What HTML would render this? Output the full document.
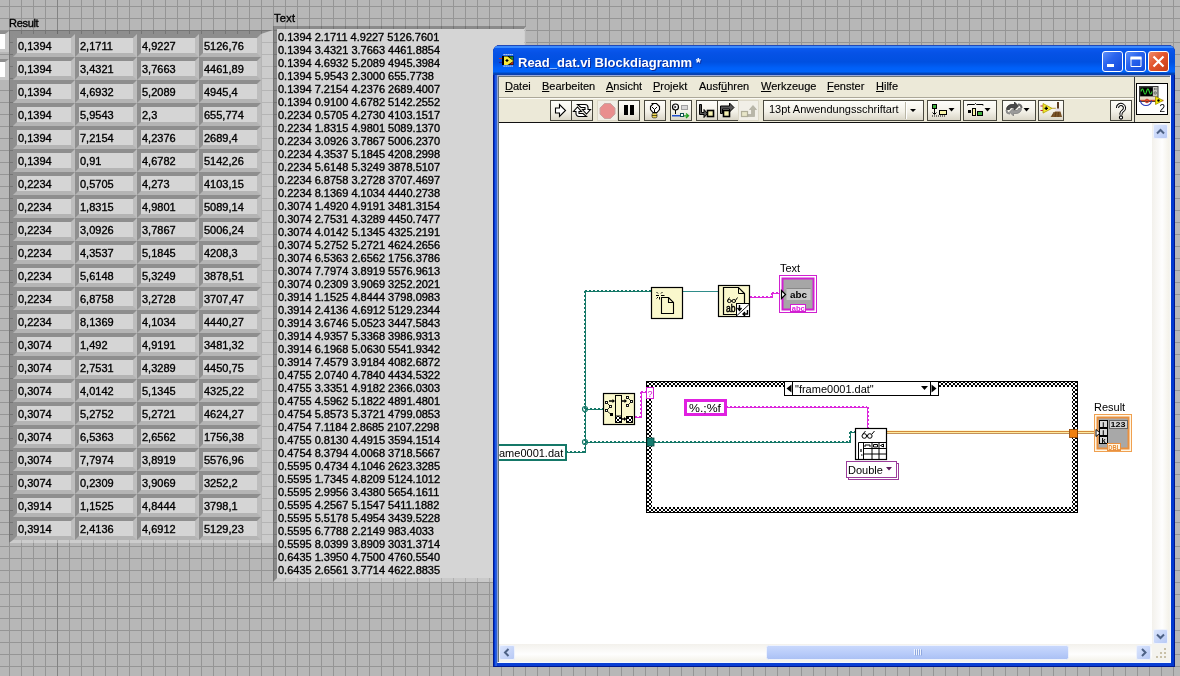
<!DOCTYPE html>
<html><head><meta charset="utf-8">
<style>
*{margin:0;padding:0;box-sizing:border-box}
html,body{width:1180px;height:676px;overflow:hidden}
body{position:relative;font-family:"Liberation Sans",sans-serif;font-size:11px;color:#000;-webkit-text-stroke:0.35px #000;
background-color:#b7b7b7;
background-image:linear-gradient(to right,#959595 1px,transparent 1px),linear-gradient(to bottom,#959595 1px,transparent 1px);
background-size:12px 12px;background-position:9px 6px}
.a{position:absolute}
.lbl{position:absolute;font-size:11px;line-height:13px;white-space:nowrap;letter-spacing:-0.3px}
/* array */
#arr{left:9px;top:30px;width:264px;height:513px;border-style:solid;border-width:4px 12px 3px 4px;border-color:rgba(40,40,40,.28) rgba(255,255,255,.3) rgba(255,255,255,.3) rgba(40,40,40,.28);background:transparent}
.cell{position:absolute;width:62px;height:23px;border:4px solid;border-color:#8e8e8e #bdbdbd #b4b4b4 #8f8f8f;background:#d5d5d5;padding-left:1px;padding-top:1px;line-height:15px;font-size:11px;white-space:nowrap}
.idx{position:absolute;left:-10px;width:19px;height:21px;border-style:solid;border-width:3px 4px 3px 0;border-color:#8e8e8e #c8c8c8 #c8c8c8 #8e8e8e;background:#fff}
/* text indicator */
#txt{left:273px;top:26px;width:253px;height:556px;border-style:solid;border-width:3px 2px 4px 4px;border-color:rgba(40,40,40,.3) rgba(255,255,255,.35) rgba(255,255,255,.25) rgba(40,40,40,.3);background:#d5d5d5;background-clip:padding-box}
#txtc{position:absolute;left:1px;top:2px;line-height:13px;font-size:11px;white-space:nowrap}
/* window */
#win{left:493px;top:45px;width:682px;height:622px;background:linear-gradient(to right,#0038d0 0px,#0038d0 2px,#2058e8 2px,#2058e8 3px,#3060d0 3px,#3060d0 4px,#0a3fd4 4px,#0a3fd4 678px,#0038d0 678px);box-shadow:inset 1px 0 0 #001890,inset -1px 0 0 #001890,inset 0 -1px 0 #001890;border-radius:7px 7px 0 0;overflow:hidden}
#title{left:0;top:0;width:682px;height:30px;background:linear-gradient(to bottom,#2048b8 0px,#2048b8 1px,#3c8cff 1px,#3a88fc 3px,#0a5af0 3px,#0652e6 8px,#0050e0 17px,#0060f8 23px,#0064fa 27px,#0048c0 28px,#0a3ca8 30px)}
#ttext{left:25px;top:10px;font-weight:bold;font-size:13px;line-height:15px;color:#fff;-webkit-text-stroke:0;text-shadow:1px 1px 0 #0a2a9a;white-space:nowrap}
.tb{position:absolute;top:6px;width:21px;height:21px;border:1px solid #fff;border-radius:3px;background:linear-gradient(135deg,#5e90f8 0%,#2a64ee 40%,#1149dc 100%)}
#menubar{left:499px;top:77px;width:671px;height:20px;background:#ece9d8}
.mi{position:absolute;top:3px;font-size:11px;line-height:13px;white-space:nowrap;-webkit-text-stroke:0.15px #000}
.mi u{text-decoration:underline;text-underline-offset:1px}
#toolbar{left:499px;top:97px;width:671px;height:26px;background:#ece9d8;border-bottom:1px solid #111}
#canvas{left:499px;top:123px;width:653px;height:521px;background:#fff;overflow:hidden}
#vsb{left:1152px;top:123px;width:17px;height:521px;background:linear-gradient(to right,#f3f1ec,#fefefe 60%,#f4f2ea)}
#hsb{left:499px;top:644px;width:653px;height:17px;background:linear-gradient(to bottom,#f3f1ec,#fefefe 60%,#f4f2ea)}
.sbb{position:absolute;width:15px;height:15px;border:1px solid #e8eefc;border-radius:2px;background:linear-gradient(135deg,#d2defc,#b9cbf6)}

</style></head><body><div id="root" style="position:absolute;left:0;top:0;width:1180px;height:676px;will-change:transform">
<div class="a" style="left:57px;top:0;width:1px;height:676px;background:#838383"></div>
<div class="lbl" style="left:9px;top:17px">Result</div>
<div class="lbl" style="left:274px;top:12px;letter-spacing:0.3px">Text</div>
<div class="a" id="arr"></div>
<div class="idx" style="top:31px"></div>
<div class="idx" style="top:59px"></div>
<div class="cell" style="left:13px;top:34px">0,1394</div>
<div class="cell" style="left:75px;top:34px">2,1711</div>
<div class="cell" style="left:137px;top:34px">4,9227</div>
<div class="cell" style="left:199px;top:34px">5126,76</div>
<div class="cell" style="left:13px;top:57px">0,1394</div>
<div class="cell" style="left:75px;top:57px">3,4321</div>
<div class="cell" style="left:137px;top:57px">3,7663</div>
<div class="cell" style="left:199px;top:57px">4461,89</div>
<div class="cell" style="left:13px;top:80px">0,1394</div>
<div class="cell" style="left:75px;top:80px">4,6932</div>
<div class="cell" style="left:137px;top:80px">5,2089</div>
<div class="cell" style="left:199px;top:80px">4945,4</div>
<div class="cell" style="left:13px;top:103px">0,1394</div>
<div class="cell" style="left:75px;top:103px">5,9543</div>
<div class="cell" style="left:137px;top:103px">2,3</div>
<div class="cell" style="left:199px;top:103px">655,774</div>
<div class="cell" style="left:13px;top:126px">0,1394</div>
<div class="cell" style="left:75px;top:126px">7,2154</div>
<div class="cell" style="left:137px;top:126px">4,2376</div>
<div class="cell" style="left:199px;top:126px">2689,4</div>
<div class="cell" style="left:13px;top:149px">0,1394</div>
<div class="cell" style="left:75px;top:149px">0,91</div>
<div class="cell" style="left:137px;top:149px">4,6782</div>
<div class="cell" style="left:199px;top:149px">5142,26</div>
<div class="cell" style="left:13px;top:172px">0,2234</div>
<div class="cell" style="left:75px;top:172px">0,5705</div>
<div class="cell" style="left:137px;top:172px">4,273</div>
<div class="cell" style="left:199px;top:172px">4103,15</div>
<div class="cell" style="left:13px;top:195px">0,2234</div>
<div class="cell" style="left:75px;top:195px">1,8315</div>
<div class="cell" style="left:137px;top:195px">4,9801</div>
<div class="cell" style="left:199px;top:195px">5089,14</div>
<div class="cell" style="left:13px;top:218px">0,2234</div>
<div class="cell" style="left:75px;top:218px">3,0926</div>
<div class="cell" style="left:137px;top:218px">3,7867</div>
<div class="cell" style="left:199px;top:218px">5006,24</div>
<div class="cell" style="left:13px;top:241px">0,2234</div>
<div class="cell" style="left:75px;top:241px">4,3537</div>
<div class="cell" style="left:137px;top:241px">5,1845</div>
<div class="cell" style="left:199px;top:241px">4208,3</div>
<div class="cell" style="left:13px;top:264px">0,2234</div>
<div class="cell" style="left:75px;top:264px">5,6148</div>
<div class="cell" style="left:137px;top:264px">5,3249</div>
<div class="cell" style="left:199px;top:264px">3878,51</div>
<div class="cell" style="left:13px;top:287px">0,2234</div>
<div class="cell" style="left:75px;top:287px">6,8758</div>
<div class="cell" style="left:137px;top:287px">3,2728</div>
<div class="cell" style="left:199px;top:287px">3707,47</div>
<div class="cell" style="left:13px;top:310px">0,2234</div>
<div class="cell" style="left:75px;top:310px">8,1369</div>
<div class="cell" style="left:137px;top:310px">4,1034</div>
<div class="cell" style="left:199px;top:310px">4440,27</div>
<div class="cell" style="left:13px;top:333px">0,3074</div>
<div class="cell" style="left:75px;top:333px">1,492</div>
<div class="cell" style="left:137px;top:333px">4,9191</div>
<div class="cell" style="left:199px;top:333px">3481,32</div>
<div class="cell" style="left:13px;top:356px">0,3074</div>
<div class="cell" style="left:75px;top:356px">2,7531</div>
<div class="cell" style="left:137px;top:356px">4,3289</div>
<div class="cell" style="left:199px;top:356px">4450,75</div>
<div class="cell" style="left:13px;top:379px">0,3074</div>
<div class="cell" style="left:75px;top:379px">4,0142</div>
<div class="cell" style="left:137px;top:379px">5,1345</div>
<div class="cell" style="left:199px;top:379px">4325,22</div>
<div class="cell" style="left:13px;top:402px">0,3074</div>
<div class="cell" style="left:75px;top:402px">5,2752</div>
<div class="cell" style="left:137px;top:402px">5,2721</div>
<div class="cell" style="left:199px;top:402px">4624,27</div>
<div class="cell" style="left:13px;top:425px">0,3074</div>
<div class="cell" style="left:75px;top:425px">6,5363</div>
<div class="cell" style="left:137px;top:425px">2,6562</div>
<div class="cell" style="left:199px;top:425px">1756,38</div>
<div class="cell" style="left:13px;top:448px">0,3074</div>
<div class="cell" style="left:75px;top:448px">7,7974</div>
<div class="cell" style="left:137px;top:448px">3,8919</div>
<div class="cell" style="left:199px;top:448px">5576,96</div>
<div class="cell" style="left:13px;top:471px">0,3074</div>
<div class="cell" style="left:75px;top:471px">0,2309</div>
<div class="cell" style="left:137px;top:471px">3,9069</div>
<div class="cell" style="left:199px;top:471px">3252,2</div>
<div class="cell" style="left:13px;top:494px">0,3914</div>
<div class="cell" style="left:75px;top:494px">1,1525</div>
<div class="cell" style="left:137px;top:494px">4,8444</div>
<div class="cell" style="left:199px;top:494px">3798,1</div>
<div class="cell" style="left:13px;top:517px">0,3914</div>
<div class="cell" style="left:75px;top:517px">2,4136</div>
<div class="cell" style="left:137px;top:517px">4,6912</div>
<div class="cell" style="left:199px;top:517px">5129,23</div>
<div class="a" id="txt"><div id="txtc">0.1394 2.1711 4.9227 5126.7601<br>0.1394 3.4321 3.7663 4461.8854<br>0.1394 4.6932 5.2089 4945.3984<br>0.1394 5.9543 2.3000 655.7738<br>0.1394 7.2154 4.2376 2689.4007<br>0.1394 0.9100 4.6782 5142.2552<br>0.2234 0.5705 4.2730 4103.1517<br>0.2234 1.8315 4.9801 5089.1370<br>0.2234 3.0926 3.7867 5006.2370<br>0.2234 4.3537 5.1845 4208.2998<br>0.2234 5.6148 5.3249 3878.5107<br>0.2234 6.8758 3.2728 3707.4697<br>0.2234 8.1369 4.1034 4440.2738<br>0.3074 1.4920 4.9191 3481.3154<br>0.3074 2.7531 4.3289 4450.7477<br>0.3074 4.0142 5.1345 4325.2191<br>0.3074 5.2752 5.2721 4624.2656<br>0.3074 6.5363 2.6562 1756.3786<br>0.3074 7.7974 3.8919 5576.9613<br>0.3074 0.2309 3.9069 3252.2021<br>0.3914 1.1525 4.8444 3798.0983<br>0.3914 2.4136 4.6912 5129.2344<br>0.3914 3.6746 5.0523 3447.5843<br>0.3914 4.9357 5.3368 3986.9313<br>0.3914 6.1968 5.0630 5541.9342<br>0.3914 7.4579 3.9184 4082.6872<br>0.4755 2.0740 4.7840 4434.5322<br>0.4755 3.3351 4.9182 2366.0303<br>0.4755 4.5962 5.1822 4891.4801<br>0.4754 5.8573 5.3721 4799.0853<br>0.4754 7.1184 2.8685 2107.2298<br>0.4755 0.8130 4.4915 3594.1514<br>0.4754 8.3794 4.0068 3718.5667<br>0.5595 0.4734 4.1046 2623.3285<br>0.5595 1.7345 4.8209 5124.1012<br>0.5595 2.9956 3.4380 5654.1611<br>0.5595 4.2567 5.1547 5411.1882<br>0.5595 5.5178 5.4954 3439.5228<br>0.5595 6.7788 2.2149 983.4033<br>0.5595 8.0399 3.8909 3031.3714<br>0.6435 1.3950 4.7500 4760.5540<br>0.6435 2.6561 3.7714 4622.8835</div></div>
<div class="a" id="win">
 <div class="a" id="title"></div>
 <div class="a" id="ttext">Read_dat.vi Blockdiagramm *</div>
 <div class="tb" style="left:609px"></div>
 <div class="tb" style="left:632px"></div>
 <div class="tb" style="left:655px;background:linear-gradient(135deg,#f08a6a 0%,#e2542c 45%,#c73c16 100%)"></div>
</div>
<div class="a" style="left:497px;top:75px;width:674px;height:588px;background:#f4f3ee;border-style:solid;border-width:1px;border-color:#98a8d8 #f4f8ff #f4f8ff #8ea2d8"></div>
<div class="a" style="left:498px;top:76px;width:672px;height:586px;border-style:solid;border-width:1px 0 0 1px;border-color:#687478"></div>
<div class="a" id="menubar">
 <div class="mi" style="left:6px"><u>D</u>atei</div>
 <div class="mi" style="left:43px"><u>B</u>earbeiten</div>
 <div class="mi" style="left:107px"><u>A</u>nsicht</div>
 <div class="mi" style="left:154px"><u>P</u>rojekt</div>
 <div class="mi" style="left:200px">Ausf<u>ü</u>hren</div>
 <div class="mi" style="left:262px"><u>W</u>erkzeuge</div>
 <div class="mi" style="left:328px"><u>F</u>enster</div>
 <div class="mi" style="left:377px"><u>H</u>ilfe</div>
</div>
<div class="a" id="toolbar"></div>
<div class="a" id="canvas"></div>
<div class="a" id="vsb"></div>
<div class="a" id="hsb"></div>
<svg class="a" style="left:0;top:0" width="1180" height="676" viewBox="0 0 1180 676" font-family="Liberation Sans, sans-serif">
<defs>
<linearGradient id="btn" x1="0" y1="0" x2="0" y2="1"><stop offset="0" stop-color="#fefefb"/><stop offset="0.55" stop-color="#f3f1e8"/><stop offset="1" stop-color="#d9d5c6"/></linearGradient>
<linearGradient id="btnr" x1="0" y1="0" x2="1" y2="0"><stop offset="0.8" stop-color="#fff" stop-opacity="0"/><stop offset="1" stop-color="#c8c4b4" stop-opacity="0.6"/></linearGradient>
<linearGradient id="sbb" x1="0" y1="0" x2="1" y2="1"><stop offset="0" stop-color="#dce6fd"/><stop offset="1" stop-color="#b6c8f5"/></linearGradient>
<linearGradient id="thumb" x1="0" y1="0" x2="0" y2="1"><stop offset="0" stop-color="#c9d8fc"/><stop offset="0.5" stop-color="#bacdfa"/><stop offset="1" stop-color="#aac0f4"/></linearGradient>
<pattern id="chk" x="0" y="2" width="4" height="4" patternUnits="userSpaceOnUse"><rect width="4" height="4" fill="#000"/><path d="M1 0h2v1H1zM0 1h1v2H0zM3 1h1v2H3zM1 3h2v1H1z" fill="#fff"/></pattern>
<clipPath id="cv"><rect x="499" y="123" width="653" height="521"/></clipPath>
</defs>
<!-- title icon -->
<rect x="502" y="56" width="11.5" height="9" fill="#000"/>
<path d="M504 56.5h3.5l6 4.5-6 4h-3.5z" fill="#f6e83a"/>
<path d="M509 56.5h4v4z" fill="#2a8a2a"/><path d="M509.5 64.5h3.5v-3z" fill="#b02818"/>
<path d="M505.5 60.5h3M507 59v3" stroke="#000" stroke-width="1.2"/>
<g fill="#e8eef8"><rect x="503.5" y="54" width="1.2" height="1.2"/><rect x="505.5" y="54" width="1.2" height="1.2"/><rect x="507.5" y="54" width="1.2" height="1.2"/><rect x="509.5" y="54" width="1.2" height="1.2"/><rect x="511.5" y="54" width="1.2" height="1.2"/>
<rect x="503.5" y="65.5" width="1.2" height="1.2"/><rect x="505.5" y="65.5" width="1.2" height="1.2"/><rect x="507.5" y="65.5" width="1.2" height="1.2"/><rect x="509.5" y="65.5" width="1.2" height="1.2"/><rect x="511.5" y="65.5" width="1.2" height="1.2"/></g>
<path d="M499 58.5h3" stroke="#c03030" stroke-width="1"/><path d="M499 62.5h3" stroke="#2020a0" stroke-width="1.2"/>
<!-- title buttons glyphs -->
<rect x="1107" y="64" width="7" height="3" fill="#fff"/>
<path d="M1131 57.5h10v9h-10z" fill="none" stroke="#fff" stroke-width="1"/><rect x="1130.5" y="56.5" width="11" height="3" fill="#fff"/>
<path d="M1153.5 56.5l10 10M1163.5 56.5l-10 10" stroke="#fff" stroke-width="2.2"/>
<!-- menubar/toolbar separators -->
<rect x="499" y="97" width="635" height="1" fill="#aca899"/><rect x="499" y="98" width="635" height="1" fill="#fbfaf4"/>
<rect x="1134" y="77" width="1" height="45" fill="#3a3a3a"/>
<!-- toolbar buttons -->
<g stroke="#4a493f" stroke-width="1" fill="url(#btn)">
<rect x="550.5" y="100.5" width="21" height="20"/>
<rect x="571.5" y="100.5" width="21" height="20"/>
<rect x="618.5" y="100.5" width="21" height="20"/>
<rect x="644.5" y="100.5" width="21" height="20"/>
<rect x="670.5" y="100.5" width="21" height="20"/>
<rect x="696.5" y="100.5" width="21" height="20"/>
<rect x="717.5" y="100.5" width="21" height="20"/>
<rect x="763.5" y="100.5" width="160" height="20"/>
<rect x="927.5" y="100.5" width="33" height="20"/>
<rect x="963.5" y="100.5" width="33" height="20"/>
<rect x="1002.5" y="100.5" width="33" height="20"/>
<rect x="1038.5" y="100.5" width="25" height="20"/>
<rect x="1110.5" y="100.5" width="21" height="20"/>
</g>
<rect x="597.5" y="100.5" width="20" height="20" fill="#f1efe7" stroke="#dcd8c8"/>
<rect x="738.5" y="100.5" width="20" height="20" fill="#f1efe7" stroke="#dcd8c8"/>
<!-- run -->
<path d="M555.5 108h4v-3.5l6 6-6 6V113h-4z" fill="#fff" stroke="#000" stroke-width="1.1"/>
<!-- run continuously -->
<g fill="#fff" stroke="#000" stroke-width="1.1" stroke-linejoin="miter">
<path d="M577.5 104.5H585a3 3 0 0 1 3 3V109.5H590.5L586.5 114L582.5 109.5H585V107.5H581Z"/>
<path d="M586.5 116.5H579a3 3 0 0 1-3-3V111.5H573.5L577.5 107L581.5 111.5H579V113.5H583Z"/>
</g>
<!-- abort -->
<path d="M604.5 103.5h6l4.5 4.5v6l-4.5 4.5h-6l-4.5-4.5v-6z" fill="#e98e8e" stroke="#c8a4a0" stroke-width="1"/>
<!-- pause -->
<rect x="624" y="105" width="4" height="10" fill="#000"/><rect x="630" y="105" width="4" height="10" fill="#000"/>
<!-- highlight bulb -->
<path d="M652 103.5h5l3 3v3l-2.5 3h-4l-2.5-3v-3l3-3z" fill="#fff" stroke="#000" stroke-width="1.1" transform="translate(-0.5 0)"/>
<path d="M652 107l2.5 2.5 2.5-2.5M654.5 109.5v3.5" fill="none" stroke="#000" stroke-width="1"/>
<rect x="652" y="113.2" width="5" height="4.6" rx="1.5" fill="#f0d850" stroke="#000" stroke-width="0.6"/>
<path d="M652 115.5h5" stroke="#000" stroke-width="0.6"/>
<!-- retain wire values -->
<circle cx="675.5" cy="107" r="3" fill="#fff" stroke="#000" stroke-width="1.2"/>
<path d="M674.5 105.5l2 1.5-2 1.5z" fill="#000"/>
<rect x="675" y="110" width="1" height="4" fill="#000"/>
<rect x="681.5" y="105.5" width="6" height="4" fill="#d8d8d8" stroke="#a0a0a0"/>
<rect x="672" y="115" width="8" height="1.5" fill="#2050d0"/>
<rect x="680.5" y="113.5" width="3" height="3" fill="#fff" stroke="#105050"/>
<path d="M684 115.8h4M686 113.5l2.5 2.3-2.5 2.3" fill="none" stroke="#20a020" stroke-width="1.3"/>
<!-- step into -->
<path d="M699.5 104.5h2v8h2.5v-3l3.5 4-3.5 4v-3h-4.5z" fill="#555" stroke="#000" stroke-width="1"/>
<rect x="707.5" y="110.5" width="6" height="6" fill="#f4f0b0" stroke="#000" stroke-width="1.6"/>
<!-- step over -->
<path d="M720.5 113.5v-7.5h9v-3l4.5 4.5-4.5 4.5v-3h-7v4.5z" fill="#555" stroke="#000" stroke-width="1"/>
<rect x="723.5" y="110.5" width="6" height="6" fill="#f4f0b0" stroke="#000" stroke-width="1.6"/>
<!-- step out disabled -->
<rect x="741.5" y="111.5" width="6" height="5" fill="#e8e6c8" stroke="#b0ae98" stroke-width="1.2"/>
<path d="M748 114.5h3.5v-5h-2l3.5-4 3.5 4h-2v7h-6.5z" fill="#b8b6a8" stroke="#a8a698" stroke-width="0.6"/>
<!-- font dropdown -->
<text x="769" y="113" font-size="11" fill="#000">13pt Anwendungsschriftart</text>
<rect x="905" y="102" width="1" height="17" fill="#b9b6a6"/><rect x="906" y="102" width="1" height="17" fill="#fff"/>
<path d="M910 109h6l-3 3z" fill="#000"/>
<!-- align -->
<rect x="932.5" y="104.5" width="4" height="4" fill="#3fae3f" stroke="#000"/>
<path d="M934.5 109v5M932.5 112.5l2 2 2-2" fill="none" stroke="#000" stroke-width="1"/>
<path d="M932 116h13" stroke="#000" stroke-dasharray="1 1" stroke-width="1"/>
<rect x="939.5" y="110.5" width="7" height="4" fill="#f8f4a8" stroke="#000"/>
<path d="M948.5 108h6l-3 3.5z" fill="#000"/>
<!-- distribute -->
<path d="M967.5 105.5v-1h7l1-1 1 1h6.5v1" fill="none" stroke="#000"/>
<rect x="968" y="110" width="3" height="3" fill="#000"/>
<rect x="972.5" y="108.5" width="3" height="7" fill="#f8f4a8" stroke="#000"/>
<rect x="977.5" y="111.5" width="5" height="4" fill="#3fae3f" stroke="#000"/>
<path d="M984.5 108h6l-3 3.5z" fill="#000"/>
<!-- reorder -->
<path d="M1006.5 109.5c0-3 2.5-5 5.5-5h2.5v-2.5l4 4-4 4v-2.5h-2.5c-1.5 0-2.5 1-2.5 2z" fill="#4a4a4a" stroke="#222" stroke-width="0.7"/>
<path d="M1021.5 108.5c0 3-2.5 5-5.5 5h-2.5v2.5l-4-4 4-4v2.5h2.5c1.5 0 2.5-1 2.5-2z" fill="#9a9a9a" stroke="#777" stroke-width="0.7"/>
<path d="M1006.5 110c0 2 1.5 3.5 3.5 3.5" fill="none" stroke="#8a8a8a" stroke-width="2"/>
<path d="M1021.5 108c0-2-1.5-3.5-3.5-3.5" fill="none" stroke="#6a6a6a" stroke-width="2"/>
<path d="M1023.5 108h6l-3 3.5z" fill="#000"/>
<!-- cleanup -->
<path d="M1040.5 106h3M1040.5 110.5h3" stroke="#c02040" stroke-width="1"/>
<path d="M1043 103.5l9 4.8-9 4.8z" fill="#f4e830" stroke="#b0a000" stroke-width="0.8"/>
<path d="M1044.5 108.3h3.5M1046.2 106.5v3.6" stroke="#000" stroke-width="1.3"/>
<path d="M1052 108.3h4" stroke="#c0a040" stroke-width="1"/>
<rect x="1057" y="102" width="2" height="7.5" fill="#5a3a20"/>
<rect x="1055.5" y="108.5" width="5" height="3" fill="#e8e0e8"/>
<path d="M1055 111.5h5.5l1.5 5.5h-11.5z" fill="#7a5428"/>
<path d="M1052 116l2-4M1055 117l1-5M1058 117l.5-5" stroke="#5a3a18" stroke-width="0.8"/>
<!-- help -->
<path d="M1117.5 108a3.5 3.5 0 1 1 5.5 2.8c-1.2.8-2 1.6-2 2.7v1.2" fill="none" stroke="#000" stroke-width="3.2"/>
<path d="M1117.5 108a3.5 3.5 0 1 1 5.5 2.8c-1.2.8-2 1.6-2 2.7v1.2" fill="none" stroke="#fff" stroke-width="1.2"/>
<circle cx="1121" cy="117.5" r="1.6" fill="#fff" stroke="#000" stroke-width="1.1"/>
<!-- VI icon -->
<rect x="1136.5" y="83.5" width="31" height="31" fill="#fff" stroke="#000"/>
<rect x="1139" y="86" width="19.5" height="16" fill="#3a3a3a"/>
<rect x="1140.5" y="87.5" width="12" height="8.5" fill="#000"/>
<rect x="1153" y="87" width="4.5" height="9" fill="#c8c8c0"/>
<circle cx="1155.2" cy="93" r="1.2" fill="none" stroke="#555" stroke-width="0.8"/>
<path d="M1154.5 88v2M1156 88v2" stroke="#555" stroke-width="0.7"/>
<rect x="1140" y="96.5" width="17.5" height="4.5" fill="#eadcc8"/>
<polyline points="1141.00,91.50 1141.25,90.77 1141.50,90.09 1141.75,89.54 1142.00,89.13 1142.25,88.93 1142.50,88.93 1142.75,89.13 1143.00,89.54 1143.25,90.09 1143.50,90.77 1143.75,91.50 1144.00,92.23 1144.25,92.91 1144.50,93.46 1144.75,93.87 1145.00,94.07 1145.25,94.07 1145.50,93.87 1145.75,93.46 1146.00,92.91 1146.25,92.23 1146.50,91.50 1146.75,90.77 1147.00,90.09 1147.25,89.54 1147.50,89.13 1147.75,88.93 1148.00,88.93 1148.25,89.13 1148.50,89.54 1148.75,90.09 1149.00,90.77 1149.25,91.50 1149.50,92.23 1149.75,92.91 1150.00,93.46 1150.25,93.87 1150.50,94.07 1150.75,94.07 1151.00,93.87 1151.25,93.46 1151.50,92.91 1151.75,92.23 1152.00,91.50" fill="none" stroke="#30d030" stroke-width="1.1"/>
<path d="M1140 100.5h23.5" stroke="#e0502a" stroke-width="1.4"/>
<path d="M1140.5 100.5a5.5 5 0 0 0 11 0" fill="none" stroke="#2838b8" stroke-width="1.1"/>
<circle cx="1147" cy="101" r="1.8" fill="none" stroke="#d03020" stroke-width="1"/>
<path d="M1155.5 96.5v8l7.5-4z" fill="#f8e800" stroke="#a09000" stroke-width="0.8"/>
<circle cx="1158.5" cy="100.5" r="1.2" fill="#000"/>
<text x="1159.5" y="112" font-size="10" fill="#000">2</text>
<!-- scrollbars -->
<rect x="1153.5" y="124.5" width="14" height="14" rx="1.5" fill="url(#sbb)" stroke="#eef2fc"/>
<path d="M1157 133.5l3.5-3.5 3.5 3.5" fill="none" stroke="#4d6185" stroke-width="2"/>
<rect x="1153.5" y="629.5" width="14" height="14" rx="1.5" fill="url(#sbb)" stroke="#eef2fc"/>
<path d="M1157 634.5l3.5 3.5 3.5-3.5" fill="none" stroke="#4d6185" stroke-width="2"/>
<rect x="499.5" y="645.5" width="15" height="14" rx="1.5" fill="url(#sbb)" stroke="#eef2fc"/>
<path d="M508.5 649l-3.5 3.5 3.5 3.5" fill="none" stroke="#4d6185" stroke-width="2"/>
<rect x="1136.5" y="645.5" width="14" height="14" rx="1.5" fill="url(#sbb)" stroke="#eef2fc"/>
<path d="M1142 649l3.5 3.5-3.5 3.5" fill="none" stroke="#4d6185" stroke-width="2"/>
<rect x="766.5" y="645.5" width="302" height="14" rx="2" fill="url(#thumb)" stroke="#eef2fc"/>
<path d="M914.5 649v6M916.5 649v6M918.5 649v6M920.5 649v6" stroke="#eef3fe" stroke-width="1"/>
<path d="M915.5 649.5v6M917.5 649.5v6M919.5 649.5v6M921.5 649.5v6" stroke="#8fa8e0" stroke-width="1"/>
<g fill="#c8c0a8"><rect x="1164" y="648" width="2" height="2"/><rect x="1160" y="652" width="2" height="2"/><rect x="1164" y="652" width="2" height="2"/><rect x="1156" y="656" width="2" height="2"/><rect x="1160" y="656" width="2" height="2"/><rect x="1164" y="656" width="2" height="2"/></g>

<!-- ===== DIAGRAM ===== -->
<g id="diag" clip-path="url(#cv)">
<!-- wires -->
<rect x="566" y="452" width="20" height="1" fill="#157868"/><path d="M566 451.5H586" stroke="#157868" stroke-width="1" stroke-dasharray="2 2"/>
<rect x="585" y="291" width="1" height="162" fill="#157868"/><path d="M584.5 291V453" stroke="#157868" stroke-width="1" stroke-dasharray="2 2"/>
<rect x="585" y="291" width="66" height="1" fill="#157868"/><path d="M585 290.5H651" stroke="#157868" stroke-width="1" stroke-dasharray="2 2"/>
<rect x="586" y="409" width="17" height="1" fill="#157868"/><path d="M586 408.5H603" stroke="#157868" stroke-width="1" stroke-dasharray="2 2"/>
<rect x="586" y="442" width="61" height="1" fill="#157868"/><path d="M586 441.5H647" stroke="#157868" stroke-width="1" stroke-dasharray="2 2"/>
<rect x="654" y="442" width="196" height="1" fill="#157868"/><path d="M654 441.5H850" stroke="#157868" stroke-width="1" stroke-dasharray="2 2"/>
<rect x="850" y="432" width="1" height="11" fill="#157868"/><path d="M849.5 432V443" stroke="#157868" stroke-width="1" stroke-dasharray="2 2"/>
<rect x="850" y="432" width="5" height="1" fill="#157868"/><path d="M850 431.5H855" stroke="#157868" stroke-width="1" stroke-dasharray="2 2"/>
<rect x="750" y="297" width="22" height="1" fill="#dc28dc"/><path d="M750 296.5H772" stroke="#dc28dc" stroke-width="1" stroke-dasharray="2 2"/>
<rect x="772" y="293" width="1" height="5" fill="#dc28dc"/><path d="M771.5 293V298" stroke="#dc28dc" stroke-width="1" stroke-dasharray="2 2"/>
<rect x="772" y="293" width="8" height="1" fill="#dc28dc"/><path d="M772 292.5H780" stroke="#dc28dc" stroke-width="1" stroke-dasharray="2 2"/>
<rect x="635" y="417" width="6" height="1" fill="#dc28dc"/><path d="M635 416.5H641" stroke="#dc28dc" stroke-width="1" stroke-dasharray="2 2"/>
<rect x="641" y="392" width="1" height="26" fill="#dc28dc"/><path d="M640.5 392V418" stroke="#dc28dc" stroke-width="1" stroke-dasharray="2 2"/>
<rect x="641" y="392" width="6" height="1" fill="#dc28dc"/><path d="M641 391.5H647" stroke="#dc28dc" stroke-width="1" stroke-dasharray="2 2"/>
<rect x="726" y="407" width="141" height="1" fill="#dc28dc"/><path d="M726 406.5H867" stroke="#dc28dc" stroke-width="1" stroke-dasharray="2 2"/>
<rect x="867" y="407" width="1" height="21" fill="#dc28dc"/><path d="M868.5 407V428" stroke="#dc28dc" stroke-width="1" stroke-dasharray="2 2"/>
<circle cx="585" cy="409" r="2.5" fill="none" stroke="#157868" stroke-width="1.2"/>
<circle cx="585" cy="442" r="2.5" fill="none" stroke="#157868" stroke-width="1.2"/>
<!-- refnum wire -->
<rect x="683" y="291" width="35" height="1" fill="#2f8c8a"/>
<!-- orange wire -->
<rect x="887" y="430" width="182" height="1" fill="#fff8d8"/><rect x="887" y="431" width="182" height="1" fill="#d48a3c"/><rect x="887" y="432" width="182" height="1" fill="#fdeca0"/><rect x="887" y="433" width="182" height="1" fill="#c4915a"/>
<rect x="1078" y="430" width="16" height="1" fill="#fff8d8"/><rect x="1078" y="431" width="16" height="1" fill="#d48a3c"/><rect x="1078" y="432" width="16" height="1" fill="#fdeca0"/><rect x="1078" y="433" width="16" height="1" fill="#c4915a"/>

<!-- case structure -->
<path d="M647 382h430v130H647zM652 387v120h420V387z" fill="url(#chk)" fill-rule="evenodd"/>
<rect x="646.5" y="381.5" width="431" height="131" fill="none" stroke="#000"/>
<!-- selector label -->
<rect x="784.5" y="381.5" width="154" height="14" fill="#fff" stroke="#000"/>
<rect x="792" y="381.5" width="1" height="14" fill="#000"/><rect x="930" y="381.5" width="1" height="14" fill="#000"/>
<path d="M786.5 388.5l5-4v8z" fill="#000"/><path d="M936.5 388.5l-5-4v8z" fill="#000"/>
<path d="M921 386h7l-3.5 4z" fill="#000"/>
<text x="795" y="393" font-size="11" fill="#000">"frame0001.dat"</text>
<!-- selector terminal -->
<rect x="646.5" y="387.5" width="7" height="11" fill="#fff" stroke="#d020d0"/>
<text x="647.5" y="396.5" font-size="9" fill="#d020d0" style="-webkit-text-stroke:0">?</text>
<!-- tunnels -->
<rect x="647" y="438" width="7" height="8" fill="#127a6e" stroke="#0a4a40" stroke-width="0.8"/>
<rect x="1069.5" y="429.5" width="8" height="8" fill="#f08010" stroke="#8a4000" stroke-width="0.8"/>

<!-- path constant -->
<rect x="496" y="445" width="70" height="15" fill="#fff" stroke="#157868" stroke-width="2"/>
<text x="499" y="457" font-size="11" fill="#000">ame0001.dat</text>

<!-- node 1: open/create -->
<rect x="651.5" y="287.5" width="31" height="31" fill="#faf8cc" stroke="#000" stroke-width="1.2"/>
<path d="M661.5 297.5h7l5 5v11h-12z" fill="#faf8cc" stroke="#000" stroke-width="1.1"/>
<path d="M668.5 297.5v5h5" fill="none" stroke="#000" stroke-width="1.1"/>
<path d="M656 295.5h3M661 295.5h3.5M659.5 297v2.5M656.5 292l1.5 1.5M662.5 292l-1.5 1.5M656.5 298.5l1.5-1.5" stroke="#000" stroke-width="1"/>
<!-- node 2: read text file -->
<rect x="718.5" y="285.5" width="31" height="31" fill="#faf8cc" stroke="#000" stroke-width="1.2"/>
<path d="M723.5 287.5h15l6 6v21h-21z" fill="#faf8cc" stroke="#000" stroke-width="1.2"/>
<path d="M738.5 287.5v6h6" fill="none" stroke="#000"/>
<path d="M727.5 301a1.8 1.5 0 1 0 3.6 0a1.8 1.5 0 1 0-3.6 0M732 301a1.8 1.5 0 1 0 3.6 0a1.8 1.5 0 1 0-3.6 0M731 301h1M727.5 300.5l2-3M735.5 300.5l2-3" fill="none" stroke="#000" stroke-width="1"/>
<text x="726" y="312" font-size="10" fill="#000" stroke="#000" stroke-width="0.5" style="-webkit-text-stroke:0" textLength="9.5" lengthAdjust="spacingAndGlyphs">ab</text>
<rect x="736.5" y="303.5" width="13" height="13" fill="#fff" stroke="#000"/>
<path d="M737 315.5l12-11" stroke="#000" stroke-width="0.9"/>
<path d="M739.5 305v5M737.5 308l2 2.5 2-2.5" fill="none" stroke="#000" stroke-width="1.4"/>
<path d="M747.5 310v4h-4M745 312l-2 2 2 2" fill="none" stroke="#000" stroke-width="1.4"/>

<!-- Text terminal -->
<text x="780" y="271.5" font-size="11" fill="#000">Text</text>
<rect x="779.5" y="275.5" width="37" height="37" fill="#fff" stroke="#d020d0"/>
<rect x="782.5" y="278.5" width="31" height="31" fill="#a6a6a6" stroke="#d020d0" stroke-width="2"/>
<rect x="786.5" y="289" width="24" height="11" fill="#c8c8c8"/>
<rect x="786.5" y="288" width="24" height="1" fill="#888" stroke-dasharray="1 1"/>
<text x="790" y="298" font-size="9" font-weight="bold" fill="#000" style="-webkit-text-stroke:0" textLength="17" lengthAdjust="spacingAndGlyphs">abc</text>
<path d="M781.5 290.5l4 4-4 4z" fill="#fff" stroke="#000" stroke-width="1.2"/>
<rect x="790.5" y="304.5" width="15" height="7" fill="#fff" stroke="#d020d0"/>
<text x="791.8" y="311" font-size="8" font-weight="bold" fill="#e020e0" style="-webkit-text-stroke:0" textLength="13" lengthAdjust="spacingAndGlyphs">abc</text>

<!-- node 3: strip path -->
<rect x="603.5" y="393.5" width="31" height="31" fill="#faf8cc" stroke="#000" stroke-width="1.2"/>
<rect x="615.5" y="395.5" width="6" height="27" fill="#faf8cc" stroke="#000"/>
<rect x="615.5" y="416" width="6" height="6.5" fill="url(#chk)" stroke="#000"/>
<rect x="626.5" y="416.5" width="6" height="6" fill="url(#chk)" stroke="#000"/>
<g fill="#fff" stroke="#000" stroke-width="0.9">
<rect x="605.5" y="401.5" width="2" height="2"/><rect x="609.5" y="405.5" width="2" height="2"/><rect x="605.5" y="409.5" width="2" height="2"/>
<rect x="626.5" y="396.5" width="2" height="2"/><rect x="630.5" y="400.5" width="2" height="2"/><rect x="626.5" y="404.5" width="2" height="2"/>
</g>
<rect x="610" y="413" width="3" height="3" fill="#000"/>
<path d="M607.5 403.5l2 2M607.5 409.5l2-2M607.5 411.5l2.5 2M628.5 398.5l2 2M628.5 404.5l2-2" stroke="#000" stroke-width="0.8"/>
<path d="M609 401h4M622 401h3M622 419h2" stroke="#000" stroke-width="1.3"/>
<path d="M612.5 399l2.5 2-2.5 2zM624.5 399l2.5 2-2.5 2zM624 417l2.5 2-2.5 2z" fill="#000"/>

<!-- format constant -->
<rect x="685.5" y="400.5" width="40" height="14" fill="#fff" stroke="#e020e0" stroke-width="3"/>
<text x="689" y="411.5" font-size="11" fill="#000" textLength="32" lengthAdjust="spacingAndGlyphs">%.;%f</text>

<!-- node 4: read spreadsheet -->
<rect x="855.5" y="428.5" width="31" height="31" fill="#fff" stroke="#000" stroke-width="1.2"/>
<path d="M862 436a2.3 2.3 0 1 0 4.6 0a2.3 2.3 0 1 0-4.6 0M867.5 436a2.3 2.3 0 1 0 4.6 0a2.3 2.3 0 1 0-4.6 0M866.6 435.5h1M863 434l2.5-3M872 434l2.5-3" fill="none" stroke="#000" stroke-width="1"/>
<g fill="none" stroke="#000" stroke-width="1">
<path d="M858.5 459v-16.5h28M863.5 442.5v17M872 442.5v17M879 442.5v17M863.5 448.5h23M863.5 454h23"/>
</g>
<path d="M865 447v-2h5v2M873.5 444.5h4v2.5h-4zM880.5 445.5l3-1.5v3z" fill="none" stroke="#000" stroke-width="1"/>
<path d="M861 449v3M861 455h1.5" stroke="#000" stroke-width="1.2"/>
<!-- Double ring -->
<rect x="848.5" y="463.5" width="50" height="16" fill="#fff" stroke="#9a3c9a"/>
<rect x="846.5" y="461.5" width="50" height="16" fill="#fff" stroke="#9a3c9a"/>
<text x="848" y="473.5" font-size="11" fill="#000">Double</text>
<path d="M886 467h6l-3 3.5z" fill="#5a1a5a"/>

<!-- Result terminal -->
<text x="1094" y="410.5" font-size="11" fill="#000">Result</text>
<rect x="1094.5" y="414.5" width="37" height="37" fill="#fff6e4" stroke="#f0a050"/>
<rect x="1097.5" y="417.5" width="31" height="31" fill="#a8a8a8" stroke="#e89040" stroke-width="2"/>
<rect x="1109.5" y="420.5" width="18" height="8" fill="#d4d4d4" stroke="#666"/>
<text x="1110.5" y="427.3" font-size="7.5" font-weight="bold" fill="#000" style="-webkit-text-stroke:0" textLength="15" lengthAdjust="spacingAndGlyphs">123</text>
<g fill="#d8d8d8" stroke="#000"><rect x="1099.5" y="420.5" width="8" height="7"/><rect x="1099.5" y="428.5" width="8" height="7"/><rect x="1099.5" y="436.5" width="8" height="7"/></g>
<g font-size="7.5" font-weight="bold" fill="#000" style="-webkit-text-stroke:0"><text x="1102.3" y="426.5">i</text><text x="1102.3" y="434.5">j</text><text x="1101.5" y="442.5">k</text></g>
<path d="M1096 429.5l4 3.5-4 3.5z" fill="#fff" stroke="#000"/>
<rect x="1107.5" y="443.5" width="13" height="7" fill="#fff6e4" stroke="#e89040"/>
<text x="1108.3" y="449.8" font-size="7" font-weight="bold" fill="#e88a30" style="-webkit-text-stroke:0" textLength="12" lengthAdjust="spacingAndGlyphs">DBL</text>
</g>
</svg>

</div></body></html>
